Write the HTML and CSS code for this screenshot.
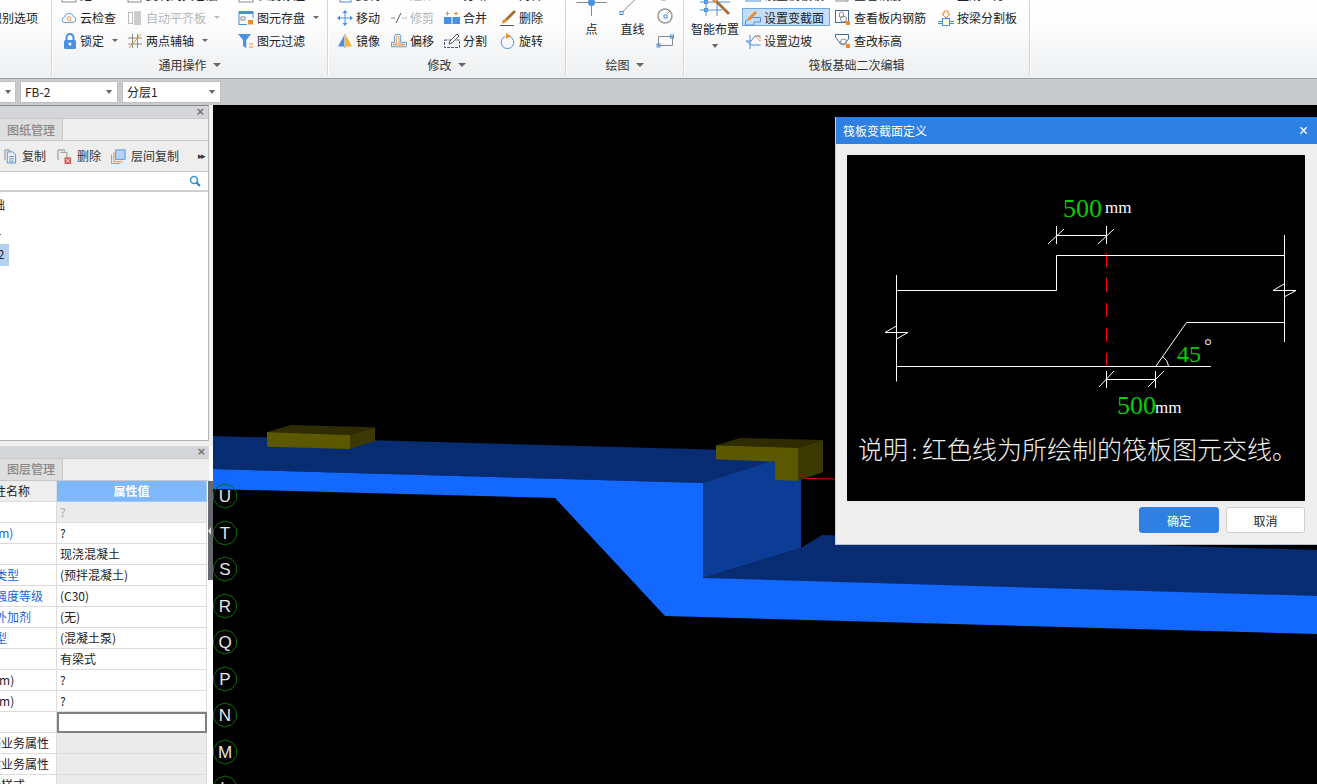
FILE: index.html
```html
<!DOCTYPE html>
<html lang="zh-CN">
<head>
<meta charset="utf-8">
<title>筏板变截面定义</title>
<link rel="stylesheet" href="styles.css">
</head>
<body>
<header class="ribbon">
  <section class="group g1">
    <div class="body"><div class="col"><div class="item"></div><div class="item clip-left"><span>识别选项</span></div></div></div>
  </section>

  <section class="group g2">
    <div class="body">
      <div class="col w66">
        <div class="item"><svg class="ico" viewBox="0 0 16 16"><rect x="1" y="1" width="14" height="14" class="s-grey"/></svg><span>定义</span></div>
        <div class="item"><svg class="ico" viewBox="0 0 18 16"><path d="M4.5 13a3 3 0 0 1-.6-6A5.2 5.2 0 0 1 14 6.5 3.3 3.3 0 0 1 14 13Z" class="s-blue"/><circle cx="9" cy="8.7" r="2.2" class="s-orange"/><path d="M10.5 10.3l1.5 1.5" class="s-orange"/></svg><span>云检查</span></div>
        <div class="item"><svg class="ico" viewBox="0 0 16 16"><rect x="3" y="7" width="12" height="9" rx="1.5" class="f-blue"/><path d="M5.5 7V4.5a3.5 3.5 0 0 1 7 0V7" class="s-blue2"/><circle cx="9" cy="11" r="1.5" class="f-white"/></svg><span>锁定</span><i class="arrow"></i></div>
      </div>
      <div class="col w111">
        <div class="item"><svg class="ico" viewBox="0 0 16 16"><rect x="1" y="1" width="13" height="14" class="s-grey"/></svg><span>复制到其它层</span><i class="arrow"></i></div>
        <div class="item off"><svg class="ico" viewBox="0 0 16 16"><rect x="1.5" y="2.5" width="4" height="11" class="s-light"/><rect x="7" y="1" width="7" height="14" class="f-light"/></svg><span>自动平齐板</span><i class="arrow light"></i></div>
        <div class="item"><svg class="ico" viewBox="0 0 16 16"><path d="M1 5h14M1 11h14M5.5 1v14M10.5 1v14" class="s-grey"/><path d="M2 15L14 1" class="s-orange"/></svg><span>两点辅轴</span><i class="arrow"></i></div>
      </div>
      <div class="col">
        <div class="item"><svg class="ico" viewBox="0 0 16 16"><rect x="1" y="1" width="14" height="14" class="s-grey"/></svg><span>长度标注</span></div>
        <div class="item"><svg class="ico" viewBox="0 0 16 16"><rect x="1" y="1.5" width="14" height="13" class="s-blue"/><rect x="1" y="1" width="14" height="3" class="f-blue"/><rect x="3" y="7" width="4" height="3" class="s-grey"/><rect x="9" y="8" width="7" height="7" class="f-white"/><rect x="10" y="10" width="5" height="4.5" class="f-orange"/></svg><span>图元存盘</span><i class="arrow"></i></div>
        <div class="item"><svg class="ico" viewBox="0 0 16 16"><path d="M0 1h13L8.3 7v8L5 13V7Z" class="f-blue"/><path d="M11 11h4M11 14h4" class="s-orange"/></svg><span>图元过滤</span></div>
      </div>
    </div>
    <div class="label"><span>通用操作</span><i class="arrow"></i></div>
  </section>

  <section class="group g3">
    <div class="body">
      <div class="col w54">
        <div class="item"><svg class="ico" viewBox="0 0 16 16"><rect x="3" y="1" width="11" height="14" class="s-blue"/></svg><span>复制</span></div>
        <div class="item"><svg class="ico" viewBox="0 0 16 16"><path d="M8 0l2.6 3H5.4ZM8 16l-2.6-3h5.2ZM0 8l3-2.6v5.2ZM16 8l-3-2.6v5.2Z" class="f-blue"/><path d="M8 3v10M3 8h10" class="s-blue"/></svg><span>移动</span></div>
        <div class="item"><svg class="ico" viewBox="0 0 16 16"><path d="M7 2.500v11H1Z" class="f-blue"/><path d="M9 2.500v11h6Z" class="f-amber"/><path d="M8 1v14" class="s-grey"/></svg><span>镜像</span></div>
      </div>
      <div class="col w53">
        <div class="item off"><svg class="ico" viewBox="0 0 16 16"><path d="M0 4h16" class="s-light"/></svg><span>延伸</span></div>
        <div class="item off"><svg class="ico" viewBox="0 0 16 16"><path d="M0 8h4" class="s-grey"/><path d="M5 13L10 3" class="s-dark"/><path d="M11 8h5" class="s-dash"/></svg><span>修剪</span></div>
        <div class="item"><svg class="ico" viewBox="0 0 18 16"><path d="M.5 14.500V9.500H4V3a2.500 2.500 0 0 1 2.500-2.500h2A2.500 2.500 0 0 1 11 3V9.500h6.500v5Z" class="s-blue"/><path d="M2.500 12.500V11.500H6V4a1.500 1.500 0 0 1 1.500-1.500A1.500 1.500 0 0 1 9 4V11.500h6.500v1Z" class="s-orange"/></svg><span>偏移</span></div>
      </div>
      <div class="col w56">
        <div class="item"><svg class="ico" viewBox="0 0 16 16"><path d="M0 4h16" class="s-light"/></svg><span>打断</span></div>
        <div class="item"><svg class="ico" viewBox="0 0 16 16"><rect x="0" y="7" width="7.500" height="7" class="f-blue"/><rect x="8.500" y="7" width="7.500" height="7" class="f-blue"/><path d="M3.500 1.500v4M1.500 3.500h4M12 1.500v4M10 3.500h4" class="s-orange"/></svg><span>合并</span></div>
        <div class="item"><svg class="ico" viewBox="0 0 16 16"><rect x=".5" y="7" width="15" height="7.500" class="s-navy"/><path d="M5 11l1-3 7-7 2 2-7 7Z" class="f-white-s"/></svg><span>分割</span></div>
      </div>
      <div class="col">
        <div class="item"><svg class="ico" viewBox="0 0 16 16"><path d="M0 4h15" class="s-grey"/></svg><span>对齐</span></div>
        <div class="item"><svg class="ico" viewBox="0 0 16 16"><path d="M14 0l2 2L7 11 5 9Z" class="f-brown"/><path d="M5 9c-2 .5-3 2-3 4.500 2 0 4-1 5-2.500Z" class="f-orange"/><path d="M0 15.500h14" class="s-dark"/></svg><span>删除</span></div>
        <div class="item"><svg class="ico" viewBox="0 0 16 16"><path d="M5 3.500a6.300 6.300 0 1 0 5 0" class="s-blue"/><path d="M6 0v6l5-3Z" class="f-orange"/></svg><span>旋转</span></div>
      </div>
    </div>
    <div class="label"><span>修改</span><i class="arrow"></i></div>
  </section>

  <section class="group g4">
    <div class="body">
      <div class="big w40">
        <svg class="big-ico" viewBox="0 0 40 36"><path d="M5 19.500h30M20 23v10" class="s-grey"/><circle cx="20" cy="19.500" r="3.500" class="f-blue"/></svg>
        <span>点</span>
      </div>
      <div class="big w40">
        <svg class="big-ico" viewBox="0 0 40 36"><path d="M10 29L28 11" class="s-grey"/><rect x="7.500" y="28.500" width="3" height="3" class="s-blue"/></svg>
        <span>直线</span>
      </div>
      <svg class="draw-mini" viewBox="0 0 18 69"><rect x="6" y="14" width="3" height="3" class="s-blue"/><circle cx="9" cy="33" r="7" class="s-grey2"/><rect x="8" y="32" width="3" height="3" class="s-blue"/><path d="M11 31l3-3" class="s-grey"/><path d="M2.500 53.500h14v9h-14Z" class="s-grey"/><rect x="1" y="61" width="3" height="3" class="s-blue"/><rect x="14.500" y="52" width="3" height="3" class="s-blue"/></svg>
    </div>
    <div class="label"><span>绘图</span><i class="arrow"></i></div>
  </section>

  <section class="group g5">
    <div class="body">
      <div class="big w48">
        <svg class="big-ico" viewBox="0 0 48 36"><path d="M9 19h30M9 27h22M15 16v17M26 16v17" class="s-blue"/><rect x="13.500" y="17.500" width="3" height="3" class="s-blue"/><rect x="13.500" y="25.500" width="3" height="3" class="s-blue"/><path d="M24 19l13 13 2-2-13-13Z" class="f-brown"/><path d="M23 16l3 3-3 1-2-3Z" class="f-orange"/></svg>
        <span>智能布置</span>
        <i class="arrow big-arrow"></i>
      </div>
      <div class="col w93">
        <div class="item pad"><svg class="ico" viewBox="0 0 16 16"><rect x="1" y="2" width="15" height="12" class="s-blue"/></svg><span>设置筏板坡</span></div>
        <div class="item pad selected"><svg class="ico" viewBox="0 0 16 16"><path d="M.5 15V11L6 7.500h9.500V12H9v3Z" class="s-blue"/><path d="M3 8l7-7 2 2-7 7-3 1Z" class="f-orange"/></svg><span>设置变截面</span></div>
        <div class="item pad"><svg class="ico" viewBox="0 0 16 16"><path d="M1 8h5l4-5h5.500M1 8l5 4h9.500M5 2v14" class="s-blue"/><path d="M10 3h5v5Z" class="s-dash-o"/></svg><span>设置边坡</span></div>
      </div>
      <div class="col w103">
        <div class="item"><svg class="ico" viewBox="0 0 16 16"><rect x="1" y="0" width="12" height="14" class="s-grey"/></svg><span>查看钢筋</span></div>
        <div class="item"><svg class="ico" viewBox="0 0 16 16"><rect x=".5" y=".5" width="13" height="12" class="s-navy2"/><path d="M4.500 4a2 2 0 0 1 4 0v3H4.500Z" class="s-grey"/><circle cx="8.500" cy="9" r="3" class="s-grey"/><rect x="11" y="11" width="4" height="4" class="f-orange"/></svg><span>查看板内钢筋</span></div>
        <div class="item"><svg class="ico" viewBox="0 0 16 16"><path d="M.5 1.500h13V6l-4 5H5.500L.5 4Z" class="s-navy2"/><circle cx="8.500" cy="9" r="3" class="s-grey"/><rect x="11" y="11" width="4" height="4" class="f-orange"/></svg><span>查改标高</span></div>
      </div>
      <div class="col">
        <div class="item"><svg class="ico" viewBox="0 0 16 16"><ellipse cx="8" cy="2" rx="7" ry="6" class="f-blue"/></svg><span>生成土方</span></div>
        <div class="item"><svg class="ico" viewBox="0 0 16 16"><path d="M0 11.500h4M12 11.500h4M0 13.500h4M12 13.500h4" class="s-blue"/><rect x="4.500" y="8.500" width="7" height="7" class="s-blue"/><path d="M6 1h4v3h2L8 8 4 4h2Z" class="s-orange"/></svg><span>按梁分割板</span></div>
      </div>
    </div>
    <div class="label"><span>筏板基础二次编辑</span></div>
  </section>
</header>

<nav class="optionbar">
  <div class="combo c0"><i class="arrow"></i></div>
  <div class="combo c1"><span>FB-2</span><i class="arrow"></i></div>
  <div class="combo c2"><span>分层1</span><i class="arrow"></i></div>
</nav>

<main class="main">
  <aside class="sidebar">
    <section class="panel p-top">
      <div class="panel-head"><span class="close">×</span></div>
      <div class="tabs"><div class="tab">图纸管理</div></div>
      <div class="tools">
        <div class="tool t1"><svg class="ico12" viewBox="0 0 14 16"><path d="M1 1h5v1M1 1v11" class="s-grey"/><path d="M3.500 3h6l3 3v9h-9Z" class="s-blue"/><path d="M5.500 8h5M5.500 10.500h5M5.500 13h5" class="s-blue"/></svg><span>复制</span></div>
        <div class="tool t2"><svg class="ico14" viewBox="0 0 16 16"><path d="M1 1h7v1M1 1v10h1" class="s-grey"/><path d="M3.500 3.500h7v7" class="s-grey"/><rect x="8" y="9" width="7" height="7" class="f-red"/><path d="M9.500 10.500l4 4M13.500 10.500l-4 4" class="s-white"/></svg><span>删除</span></div>
        <div class="tool t3"><svg class="ico14" viewBox="0 0 16 16"><path d="M.5 6v9.500h9" class="s-orange"/><path d="M3 3.500v10h9" class="s-orange"/><rect x="5" y="1" width="10" height="10" class="f-sky"/></svg><span>层间复制</span></div>
        <span class="more">▸▸</span>
      </div>
      <div class="search"><svg class="search-ico" viewBox="0 0 12 12"><circle cx="5" cy="5" r="3.500" class="s-teal"/><path d="M7.500 7.500L11 11" class="s-teal2"/></svg></div>
      <ul class="tree">
        <li class="tree-row"><span class="r0">基础</span></li>
        <li class="tree-row"><span class="r1">FB-1</span></li>
        <li class="tree-row active"><span class="r2">FB-2</span></li>
      </ul>
    </section>

    <section class="panel p-bottom">
      <div class="panel-head"><span class="close">×</span></div>
      <div class="tabs"><div class="tab">图层管理</div></div>
      <div class="props-wrap">
        <div class="props">
          <div class="pk head"><span class="hname">属性名称</span></div><div class="pv headv">属性值</div>
          <div class="pk"><span class="plabel">名称</span></div><div class="pv gray ghost">?</div>
          <div class="pk"><span class="plabel link">厚度(mm)</span></div><div class="pv">?</div>
          <div class="pk"><span class="plabel">材质</span></div><div class="pv">现浇混凝土</div>
          <div class="pk"><span class="plabel link">混凝土类型</span></div><div class="pv">(预拌混凝土)</div>
          <div class="pk"><span class="plabel link">混凝土强度等级</span></div><div class="pv">(C30)</div>
          <div class="pk"><span class="plabel link">混凝土外加剂</span></div><div class="pv">(无)</div>
          <div class="pk"><span class="plabel link">泵送类型</span></div><div class="pv">(混凝土泵)</div>
          <div class="pk"><span class="plabel">类别</span></div><div class="pv">有梁式</div>
          <div class="pk"><span class="plabel">顶标高(m)</span></div><div class="pv">?</div>
          <div class="pk"><span class="plabel">底标高(m)</span></div><div class="pv">?</div>
          <div class="pk"><span class="plabel">备注</span></div><div class="pv focus"></div>
          <div class="pk"><span class="plabel indent">钢筋业务属性</span></div><div class="pv gray"></div>
          <div class="pk"><span class="plabel indent">土建业务属性</span></div><div class="pv gray"></div>
          <div class="pk"><span class="plabel indent">显示样式</span></div><div class="pv gray"></div>
        </div>
        <div class="scroll"><i class="scroll-arrow"></i></div>
      </div>
    </section>
  </aside>

  <div class="canvas">
    <svg class="scene" viewBox="213 105 1104 679">
      <polygon class="c-dark" points="213,436 801,452 801,480 703,483 213,469"/>
      <polygon class="c-dark" points="703,578 801,548 822,535 1317,550 1317,600 703,590"/>
      <polygon class="c-side" points="703,483 801,452 801,548 703,578"/>
      <polygon class="c-light" points="213,469 703,483 703,578 1317,596 1317,634 665,616 555,498 213,489"/>
      <polygon class="y-top" points="267,432 291,425 375,427.300 350,435"/>
      <polygon class="y-side" points="350,435 375,427.300 375,441 350,449"/>
      <polygon class="y-front" points="267,432 350,435 350,449 267,446.700"/>
      <polygon class="y-top" points="716,445.300 740,438 823,440 798,447.700"/>
      <polygon class="y-side" points="798,447.700 823,440 823,472.300 798,480.700"/>
      <polygon class="y-front" points="716,445.300 798,447.700 798,480.700 775,480 775,461.700 716,459.300"/>
      <path class="redline" d="M805 478.500L836 479"/>
      <g transform="translate(225 496)"><polygon class="bubble" points="0,-12 7.050,-9.700 11.400,-3.700 11.400,3.700 7.050,9.700 0,12 -7.050,9.700 -11.400,3.700 -11.400,-3.700 -7.050,-9.700"/><text class="axis" y="6">U</text></g>
      <g transform="translate(225 533)"><polygon class="bubble" points="0,-12 7.050,-9.700 11.400,-3.700 11.400,3.700 7.050,9.700 0,12 -7.050,9.700 -11.400,3.700 -11.400,-3.700 -7.050,-9.700"/><text class="axis" y="6">T</text></g>
      <g transform="translate(225 569)"><polygon class="bubble" points="0,-12 7.050,-9.700 11.400,-3.700 11.400,3.700 7.050,9.700 0,12 -7.050,9.700 -11.400,3.700 -11.400,-3.700 -7.050,-9.700"/><text class="axis" y="6">S</text></g>
      <g transform="translate(225 606)"><polygon class="bubble" points="0,-12 7.050,-9.700 11.400,-3.700 11.400,3.700 7.050,9.700 0,12 -7.050,9.700 -11.400,3.700 -11.400,-3.700 -7.050,-9.700"/><text class="axis" y="6">R</text></g>
      <g transform="translate(225 642)"><polygon class="bubble" points="0,-12 7.050,-9.700 11.400,-3.700 11.400,3.700 7.050,9.700 0,12 -7.050,9.700 -11.400,3.700 -11.400,-3.700 -7.050,-9.700"/><text class="axis" y="6">Q</text></g>
      <g transform="translate(225 679)"><polygon class="bubble" points="0,-12 7.050,-9.700 11.400,-3.700 11.400,3.700 7.050,9.700 0,12 -7.050,9.700 -11.400,3.700 -11.400,-3.700 -7.050,-9.700"/><text class="axis" y="6">P</text></g>
      <g transform="translate(225 715)"><polygon class="bubble" points="0,-12 7.050,-9.700 11.400,-3.700 11.400,3.700 7.050,9.700 0,12 -7.050,9.700 -11.400,3.700 -11.400,-3.700 -7.050,-9.700"/><text class="axis" y="6">N</text></g>
      <g transform="translate(225 752)"><polygon class="bubble" points="0,-12 7.050,-9.700 11.400,-3.700 11.400,3.700 7.050,9.700 0,12 -7.050,9.700 -11.400,3.700 -11.400,-3.700 -7.050,-9.700"/><text class="axis" y="6">M</text></g>
      <g transform="translate(225 788)"><polygon class="bubble" points="0,-12 7.050,-9.700 11.400,-3.700 11.400,3.700 7.050,9.700 0,12 -7.050,9.700 -11.400,3.700 -11.400,-3.700 -7.050,-9.700"/><text class="axis" y="6">L</text></g>
    </svg>

    <div class="dialog">
      <div class="dialog-title"><span>筏板变截面定义</span><span class="dialog-x">×</span></div>
      <div class="dialog-body">
        <svg class="diagram" viewBox="847 155 458 346">
          <path class="dash" d="M1106.500 228V366"/>
          <path class="wire" d="M896.500 275V381.500M897 290.500H1056.500V255.500H1284.500M1284.500 235V342M1284.500 322.500H1186.500L1156 366M897 366.500H1211"/>
          <path class="thin" d="M1056.500 226V244M1106.500 226V244M1057 235.500H1106M1048 244L1064 229M1098 244L1114 229"/>
          <path class="thin" d="M1106.500 371V388M1155.500 371V388M1107 379.500H1155M1099 387L1114 371M1148 387L1164 371"/>
          <path class="thin" d="M1284 284L1273 290.500H1296L1284 297M896.500 326L885 332.500H908L896.500 339M1162 356Q1168 360 1168.500 366"/>
          <text class="dim" x="1063" y="217">500</text>
          <text class="unit" x="1105" y="213">mm</text>
          <text class="dim" x="1117" y="414">500</text>
          <text class="unit" x="1155" y="413">mm</text>
          <text class="angle" x="1177" y="362">45</text>
          <text class="degree" x="1204" y="353">°</text>
          <text class="note" x="858" y="459"><tspan>说明</tspan><tspan class="note-colon" dx="4">:</tspan><tspan dx="5">红色线为所绘制的筏板图元交线。</tspan></text>
        </svg>
      </div>
      <div class="dialog-foot">
        <button class="btn primary">确定</button>
        <button class="btn">取消</button>
      </div>
    </div>
  </div>
</main>
</body>
</html>
```

FILE: styles.css
```css
* { box-sizing: border-box; }
html, body { margin: 0; padding: 0; height: 784px; overflow: hidden; }
body { font: 12px/16px "Noto Sans CJK SC", "Liberation Sans", sans-serif; color: #222; background: #c8cacd; display: flex; flex-direction: column; width: 1317px; }
ul { margin: 0; padding: 0; list-style: none; }

/* ribbon */
.ribbon { height: 79px; flex: none; display: flex; overflow: hidden; background: linear-gradient(#fff 0, #fcfcfd 35%, #edeff0 100%); border-bottom: 1px solid #9b9ea1; }
.group { height: 75px; display: flex; flex-direction: column; border-right: 1px solid #d3d6d8; box-shadow: 1px 0 0 #fff; flex: none; }
.g1 { width: 52px; }
.g2 { width: 276px; }
.g3 { width: 238px; }
.g4 { width: 118px; }
.g5 { width: 346px; }
.body { height: 69px; margin-top: -17px; flex: none; display: flex; box-sizing: content-box; padding-left: 9px; }
.g1 .body { padding: 0; justify-content: flex-end; }
.g1 .col { width: 100%; overflow: hidden; }
.g4 .body { padding-left: 5px; }
.g5 .body { padding-left: 7px; }
.col { display: flex; flex-direction: column; }
.w66 { width: 66px; }
.w111 { width: 111px; }
.w54 { width: 54px; }
.w53 { width: 53px; }
.w56 { width: 56px; }
.w40 { width: 41px; }
.w48 { width: 48px; margin-right: 3px; }
.w93 { width: 93px; }
.w103 { width: 103px; }
.item { height: 23px; display: flex; align-items: center; gap: 3px; white-space: nowrap; flex: none; }
.item.pad { padding: 0 3px; height: 23px; }
.item.off { color: #b4b6b8; }
.item.clip-left { justify-content: flex-end; padding-right: 13px; }
.item.selected { position: relative; z-index: 0; width: 88px; }
.item.selected::before { content: ""; position: absolute; z-index: -1; left: 0; right: 0; top: 2px; bottom: 3px; background: #c5def8; border: 1px solid #6aa9e8; }
.ico { width: 16px; height: 16px; flex: none; }
.arrow { display: inline-block; width: 0; height: 0; border: 3px solid transparent; border-top: 3px solid #666; border-bottom: 0; margin-left: 5px; flex: none; }
.arrow.light { border-top-color: #bbb; }
.label { height: 26px; flex: none; display: flex; align-items: center; justify-content: center; gap: 0; color: #333; }
.label .arrow { margin-left: 6px; border-width: 4px 4px 0; }
.big { display: flex; flex-direction: column; align-items: center; height: 69px; flex: none; white-space: nowrap; }
.big-ico { height: 36px; flex: none; width: 100%; }
.big span { height: 20px; line-height: 20px; }
.big-arrow { margin: 5px 0 0; border-width: 4px 3px 0; }
.draw-mini { width: 18px; height: 69px; flex: none; margin-left: 3px; }

/* svg paint helpers */
.ribbon svg *, .tools svg *, .search svg * { stroke-width: 1; }
.s-grey { fill: none; stroke: #8a8a8a; }
.s-grey2 { fill: none; stroke: #999; stroke-width: 1.5 !important; }
.s-light { fill: none; stroke: #bbb; }
.s-blue { fill: none; stroke: #4a90d9; }
.s-blue2 { fill: none; stroke: #4a90e2; stroke-width: 2 !important; }
.s-orange { fill: none; stroke: #ef8a2c; }
.s-dark { fill: none; stroke: #555; }
.s-dash { fill: none; stroke: #aaa; stroke-dasharray: 2 1; }
.s-dash-o { fill: none; stroke: #ef8a2c; stroke-dasharray: 2 1; }
.s-navy { fill: none; stroke: #4a5a8a; stroke-dasharray: 3 1; }
.s-navy2 { fill: #fff; stroke: #3f6aa0; }
.s-white { fill: none; stroke: #fff; }
.s-teal { fill: none; stroke: #3d9ad1; stroke-width: 1.6 !important; }
.s-teal2 { fill: none; stroke: #2f7fae; stroke-width: 2 !important; }
.f-blue { fill: #4a90e2; }
.f-white { fill: #fff; }
.f-white-s { fill: #fff; stroke: #555; }
.f-orange { fill: #ef8a2c; }
.f-amber { fill: #f3b03a; }
.f-light { fill: #ccc; }
.f-brown { fill: #a5703c; }
.f-red { fill: #d9534f; }
.f-sky { fill: #b5d6fb; stroke: #4a90d9; }

/* option bar */
.optionbar { height: 26px; flex: none; display: flex; align-items: flex-start; padding-top: 2px; gap: 4px; background: #c8cacd; }
.combo { height: 22px; background: #fff; border: 1px solid #bfc1c4; display: flex; align-items: center; justify-content: space-between; padding: 0 4px; flex: none; }
.combo .arrow { margin: 0 1px 0 0; border-width: 4px 3px 0; }
.c0 { width: 16px; padding-right: 3px; justify-content: flex-end; border-left: 0; }
.c1 { width: 98px; }
.c2 { width: 99px; }

/* sidebar */
.main { height: 679px; flex: none; display: flex; overflow: hidden; }
.sidebar { width: 213px; flex: none; display: flex; flex-direction: column; gap: 5px; background: #f0f0f0; }
.panel { width: 209px; display: flex; flex-direction: column; background: #fff; border-right: 1px solid #b4b4b4; }
.p-top { height: 336px; border-top: 1px solid #85878a; border-bottom: 1px solid #b4b4b4; }
.p-bottom { flex: 1; width: 213px; border-right: 0; overflow: hidden; }
.panel-head { height: 12px; flex: none; background: #d4d6d9; display: flex; justify-content: flex-end; align-items: center; padding-right: 4px; }
.p-bottom .panel-head { width: 209px; }
.close { color: #777; font: bold 13px/12px "Liberation Sans", sans-serif; }
.tabs { height: 23px; flex: none; background: #eeeeee; border-top: 1px solid #c8c8c8; border-bottom: 1px solid #c8c8c8; display: flex; }
.p-bottom .tabs { width: 209px; }
.tab { width: 63px; background: #dedede; border-right: 1px solid #c8c8c8; color: #8a8a8a; font-weight: 500; padding-left: 7px; line-height: 21px; }
.p-bottom .tab { line-height: 20px; }
.tools { height: 31px; flex: none; background: #eeeeee; border-bottom: 1px solid #c8c8c8; display: flex; align-items: center; padding-left: 4px; color: #333; }
.tool { display: flex; align-items: center; gap: 5px; flex: none; }
.t1 { width: 53px; }
.t2 { width: 54px; }
.t3 { width: 87px; }
.ico12 { width: 13px; height: 15px; flex: none; }
.ico14 { width: 15px; height: 15px; flex: none; }
.more { font-size: 9px; letter-spacing: -2px; color: #333; }
.search { height: 20px; flex: none; background: #fff; border-bottom: 2px solid #cfcfcf; display: flex; justify-content: flex-end; align-items: center; padding-right: 7px; }
.search-ico { width: 12px; height: 12px; }
.tree { padding-top: 1px; overflow: hidden; }
.tree-row { height: 24.500px; display: flex; align-items: center; overflow: hidden; width: 100%; }
.tree-row.active { position: relative; z-index: 0; }
.tree-row.active::before { content: ""; position: absolute; z-index: -1; left: 0; width: 9px; top: 2px; bottom: 1px; background: #b5d0f0; }
.r0 { margin-left: -19px; }
.r1 { margin-left: -24px; }
.r2 { margin-left: -21px; }

/* property table */
.props-wrap { display: flex; flex: 1; }
.props { width: 207px; display: grid; grid-template-columns: 57px 150px; grid-auto-rows: 21px; align-content: start; flex: none; }
.pk, .pv { border-bottom: 1px solid #dcdcdc; border-right: 1px solid #dcdcdc; white-space: nowrap; overflow: hidden; line-height: 20px; }
.pk { background: #fff; }
.pv { padding-left: 3px; }
.head { background: #eeeeee; }
.hname { display: block; margin-left: -18px; }
.headv { background: #7fb8fa; color: #fff; text-align: center; font-weight: 700; padding: 0; border-color: #9cc8f8; }
.plabel { display: block; margin-left: -41px; }
.indent { margin-left: -23px; }
.link { color: #2264d6; }
.gray { background: #ebebeb; }
.ghost { color: #aaa; }
.focus { border: 2px solid #808080; }
.scroll { width: 5px; height: 99px; margin-left: 1px; background: #666a6e; position: relative; flex: none; }
.scroll-arrow { position: absolute; left: 0; top: 46px; border: 4px solid transparent; border-right: 3px solid #ddd; border-left: 0; }

/* canvas */
.canvas { flex: 1; position: relative; background: #000; overflow: hidden; }
.scene { display: block; width: 1104px; height: 679px; }
.c-dark { fill: #082c72; }
.c-side { fill: #0c3d96; }
.c-light { fill: #1268ff; }
.y-front { fill: #5c5800; }
.y-top { fill: #2e2c00; }
.y-side { fill: #3b3800; }
.redline { stroke: #e00000; stroke-width: 1; fill: none; }
.bubble { fill: none; stroke: #0a6e0a; stroke-width: 1; }
.axis { fill: #e6e6e6; font: 17px "Liberation Sans", sans-serif; text-anchor: middle; }

/* dialog */
.dialog { position: absolute; left: 622px; top: 12px; width: 482px; height: 428px; background: #eeeeee; border-left: 1px solid #c9cdd4; border-bottom: 1px solid #b9bec8; display: flex; flex-direction: column; }
.dialog-title { height: 27px; flex: none; background: #2e80e2; color: #fff; display: flex; align-items: center; justify-content: space-between; padding: 0 9px 0 7px; }
.dialog-x { font: 16px/20px "Liberation Sans", sans-serif; }
.dialog-body { padding: 11px 12px 0 11px; flex: none; }
.diagram { display: block; width: 458px; height: 346px; background: #000; }
.wire { fill: none; stroke: #fff; stroke-width: 1; }
.thin { fill: none; stroke: #fff; stroke-width: 1; }
.dash { fill: none; stroke: #f00; stroke-width: 1; stroke-dasharray: 14 11; }
.dim { fill: #00d000; font: 26px "Liberation Serif", serif; }
.unit { fill: #fff; font: 17px "Liberation Serif", serif; }
.angle { fill: #00d000; font: 24px "Liberation Serif", serif; }
.degree { fill: #ddd; font: 20px "Liberation Serif", serif; }
.note { fill: #f0f0f0; font: 300 25px "Noto Sans CJK SC", sans-serif; }
.note-colon { font-size: 20px; }
.dialog-foot { flex: 1; display: flex; justify-content: flex-end; align-items: flex-start; gap: 7px; padding: 6px 12px 0 0; }
.btn { width: 79px; height: 26px; border: 1px solid #cfcfcf; border-radius: 3px; background: #fff; color: #222; font: 12px "Noto Sans CJK SC", sans-serif; padding: 0; }
.btn.primary { width: 80px; background: #2e80e2; border-color: #2e80e2; color: #fff; }
```
